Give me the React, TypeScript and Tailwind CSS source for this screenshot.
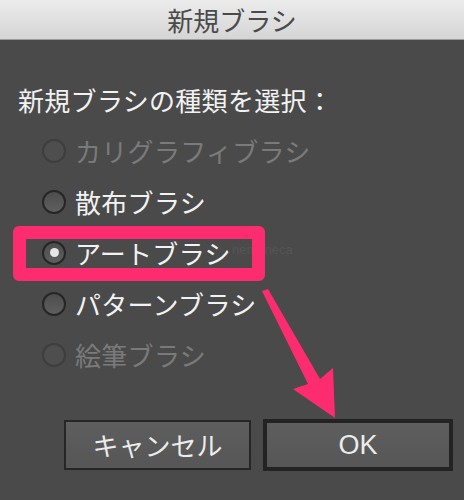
import React from "react";

const font = { fontFamily: '"Noto Sans CJK JP", "Noto Sans", sans-serif' };

function Radio({ checked, disabled }: { checked?: boolean; disabled?: boolean }) {
  return (
    <span
      className={`flex h-[24px] w-[24px] shrink-0 items-center justify-center rounded-full border-2 ${
        disabled
          ? "border-[#3e3e3e] bg-[#4e4e4e]"
          : "border-[#262626] bg-gradient-to-b from-[#4d4d4d] to-[#5f5f5f]"
      }`}
    >
      {checked && <span className="h-[9px] w-[9px] rounded-full bg-[#e6e6e6]" />}
    </span>
  );
}

function Row({ label, checked, disabled }: { label: string; checked?: boolean; disabled?: boolean }) {
  return (
    <div className="flex h-[51px] items-center pl-[42px]">
      <Radio checked={checked} disabled={disabled} />
      <span
        className={`ml-[9px] text-[26px] leading-none tracking-[0.3px] ${
          disabled ? "text-[#7a7a7a]" : "text-[#f2f2f2]"
        }`}
      >
        {label}
      </span>
    </div>
  );
}

export default function App() {
  return (
    <div className="relative h-[500px] w-[464px] overflow-hidden bg-[#4a4a4a]" style={font}>
      <div className="flex h-[40px] items-center justify-center border-b border-[#9c9c9c] bg-gradient-to-b from-[#ececec] to-[#d5d5d5]">
        <span className="text-[26px] leading-none text-[#4a4a4a]">新規ブラシ</span>
      </div>
      <div className="pt-[45px] pl-[18px] text-[26px] leading-[30px] text-[#f2f2f2] tracking-[0.3px]">
        新規ブラシの種類を選択：
      </div>
      <div className="relative mt-[10px]">
        <Row label="カリグラフィブラシ" disabled />
        <Row label="散布ブラシ" />
        <Row label="アートブラシ" checked />
        <Row label="パターンブラシ" />
        <Row label="絵筆ブラシ" disabled />
        <span className="absolute left-[232px] top-[118px] text-[13px] leading-none text-[#555555]" style={{ fontFamily: '"Liberation Sans", sans-serif' }}>
          nemaneca
        </span>
        <div className="pointer-events-none absolute left-[13px] top-[101px] h-[55px] w-[252px] rounded-[6px] border-[13px] border-[#fd2c70]" />
      </div>
      <div className="mt-[40px] flex gap-[12px] pl-[64px]">
        <button className="flex h-[50px] w-[187px] items-center justify-center border-2 border-[#262626] bg-gradient-to-b from-[#5e5e5e] to-[#565656] text-[26px] leading-none text-[#ececec]">
          キャンセル
        </button>
        <button className="flex h-[52px] w-[190px] -mt-[1px] items-center justify-center border-[4px] border-[#232323] bg-gradient-to-b from-[#5e5e5e] to-[#565656] text-[27px] leading-none text-[#ececec]" style={{ fontFamily: '"Liberation Sans", sans-serif' }}>
          OK
        </button>
      </div>
      <svg className="pointer-events-none absolute left-0 top-0" width="464" height="500" viewBox="0 0 464 500">
        <polygon points="262,291 268,289 320,379 333,368 335,418 293,389 308,384" fill="#fd2c70" />
      </svg>
    </div>
  );
}
